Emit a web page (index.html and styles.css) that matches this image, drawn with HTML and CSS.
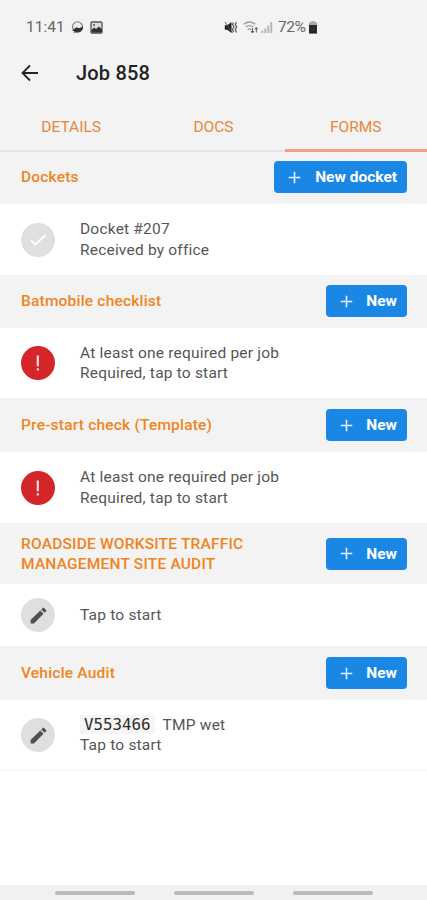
FILE: index.html
```html
<!DOCTYPE html>
<html lang="en">
<head>
<meta charset="utf-8">
<title>Job 858</title>
<link rel="stylesheet" href="styles.css">
</head>
<body>
<svg width="0" height="0" class="defs">
  <symbol id="plus" viewBox="0 0 14 14"><path d="M7 .8v12.4M.8 7h12.4" stroke="#e6f3fd" stroke-width="1.7" fill="none"/></symbol>
  <symbol id="pencil" viewBox="0 0 24 24"><path d="M3 17.25V21h3.75L17.81 9.94l-3.75-3.75L3 17.25zM20.71 7.04a1 1 0 0 0 0-1.41l-2.34-2.34a1 1 0 0 0-1.41 0l-1.83 1.83 3.75 3.75 1.83-1.83z" fill="#505050"/></symbol>
  <symbol id="alert" viewBox="0 0 34 34"><path d="M15.7 9.5h2.2v10.7h-2.2zM15.7 22.2h2.2v2.2h-2.2z" fill="#f8dada"/></symbol>
</svg>
<header class="top">
  <div class="status">
    <span class="clock">11:41</span>
    <svg class="app" width="13" height="13" viewBox="0 0 13 13"><circle cx="6.5" cy="5.8" r="5" fill="#eee" stroke="#777" stroke-width="1.1"/><path d="M.8 9.2C3.4 8.7 4.3 6 6 6.2c1.6 1.5 3.2 1 5.8-.9.5 3.500-1.600 5.900-4.400 6.200H2.200l1.500-1.300z" fill="#333"/></svg>
    <svg class="photo" width="13" height="13" viewBox="0 0 13 13"><rect x="1" y="1" width="11" height="11" rx="1" fill="#ddd" stroke="#555" stroke-width="1.3"/><path d="M1.500 11.500V9l2.500-2.500 2 1.500L9 5.500l3 3v3z" fill="#333"/><circle cx="4" cy="4" r="1" fill="#555"/></svg>
    <svg class="mute" width="14" height="13" viewBox="0 0 14 13"><path d="M.8 4.200h2.500L7.500 1v11L3.300 8.800H.8z" fill="#222"/><path d="M1 1l7.500 11" stroke="#555" stroke-width="1"/><path d="M9.500 1.500l-1 2 1.500 2.500-1.500 2.500 1 2.500M12.500 1l-1.200 2.200 1.300 2.800-1.300 2.800 1.200 2.700" stroke="#555" stroke-width="1.200" fill="none"/></svg>
    <svg class="wifi" width="16" height="13" viewBox="0 0 16 13"><path d="M.8 3.200Q6.500-1.200 12.200 3.200M2.800 6Q6.500 3.200 10.300 6M4.700 8.600Q6.500 7.200 8.300 8.600" fill="none" stroke="#999" stroke-width="1.400"/><path d="M9.500 11.800V7M8 10l1.500 2 1.500-2M13.300 11.500V6.500M11.900 8.300l1.400-1.800 1.400 1.800" stroke="#555" stroke-width="1" fill="none"/></svg>
    <svg class="signal" width="12" height="13" viewBox="0 0 12 13"><path d="M1.300 12V9.500M4.300 12V7.500M7.300 12V4.500M10.300 12V1" stroke="#b3b3b3" stroke-width="1.800"/></svg>
    <span class="percent">72%</span>
    <svg class="battery" width="10" height="13" viewBox="0 0 10 13"><path d="M3.300 0h3.400v1.300H9V12.500H1V1.300h2.300z" fill="#aaa"/><path d="M1 4h8v8.500H1z" fill="#2a2a2a"/></svg>
  </div>
  <div class="title">
    <svg width="18" height="18" viewBox="0 0 18 18"><path d="M17 9H2M9 1.500L1.500 9 9 16.500" fill="none" stroke="#252525" stroke-width="1.800"/></svg>
    <h1>Job 858</h1>
  </div>
  <nav class="tabs"><span>DETAILS</span><span>DOCS</span><span class="active">FORMS</span></nav>
</header>
<main>
  <section>
    <div class="head first"><h2 class="dockets">Dockets</h2><button class="wide"><svg><use href="#plus"/></svg><span>New docket</span></button></div>
    <div class="row"><div class="dot"><svg width="34" height="34" viewBox="0 0 34 34"><path d="M10 17.500l4.200 4L24.500 12" fill="none" stroke="#fff" stroke-width="1.900"/></svg></div><p>Docket #207<br>Received by office</p></div>
  </section>
  <section>
    <div class="head short"><h2>Batmobile checklist</h2><button><svg><use href="#plus"/></svg><span>New</span></button></div>
    <div class="row low"><div class="dot red"><svg width="34" height="34"><use href="#alert"/></svg></div><p>At least one required per job<br>Required, tap to start</p></div>
  </section>
  <section>
    <div class="head"><h2>Pre-start check (Template)</h2><button><svg><use href="#plus"/></svg><span>New</span></button></div>
    <div class="row"><div class="dot red"><svg width="34" height="34"><use href="#alert"/></svg></div><p>At least one required per job<br>Required, tap to start</p></div>
  </section>
  <section>
    <div class="head tall"><h2 class="caps">ROADSIDE WORKSITE TRAFFIC<br>MANAGEMENT SITE AUDIT</h2><button><svg><use href="#plus"/></svg><span>New</span></button></div>
    <div class="row single"><div class="dot"><svg width="21" height="21"><use href="#pencil"/></svg></div><p>Tap to start</p></div>
  </section>
  <section>
    <div class="head"><h2>Vehicle Audit</h2><button><svg><use href="#plus"/></svg><span>New</span></button></div>
    <div class="row last"><div class="dot"><svg width="21" height="21"><use href="#pencil"/></svg></div><p><code>V553466</code><span class="tag">TMP wet</span><br>Tap to start</p></div>
  </section>
</main>
<footer><i></i><i></i><i></i></footer>
</body>
</html>
```
FILE: styles.css
```css
* { box-sizing: border-box; }
body { margin: 0; width: 427px; height: 900px; overflow: hidden; background: #fff; font-family: Roboto, sans-serif; display: flex; flex-direction: column; }
.defs { position: absolute; }
svg { display: block; flex: none; }
.top { height: 152px; background: #f3f3f3; flex: none; }
.status { height: 54px; display: flex; align-items: center; padding-left: 26px; color: #666; font-size: 15.500px; }
.clock { width: 38px; }
.app { margin-left: 7px; }
.photo { margin-left: 6px; }
.mute { margin-left: 121px; }
.wifi { margin-left: 5px; }
.signal { margin-left: 2px; }
.percent { margin-left: 5px; width: 30px; letter-spacing: -.4px; }
.title { height: 38px; display: flex; align-items: center; padding-left: 21px; }
h1 { margin: 0 0 0 37px; font-size: 20px; font-weight: 500; letter-spacing: .2px; color: #222; }
.tabs { height: 60px; display: grid; grid-template-columns: 1fr 1fr 1fr; border-bottom: 2px solid #e3e3e3; }
.tabs span { display: flex; justify-content: center; padding-top: 25px; font-size: 15.500px; color: #e8873c; line-height: 20px; height: 60px; }
.tabs .active { border-bottom: 3px solid #eea188; }
.head { height: 54px; background: #f3f3f3; display: flex; align-items: center; justify-content: space-between; padding: 0 20px 0 21px; }
.head.first { height: 52px; padding-bottom: 2px; }
.head.short { height: 53px; padding-bottom: 1px; }
.head.tall { height: 61px; }
h2 { margin: 0; font-size: 15.500px; line-height: 20px; font-weight: 500; color: #f08420; letter-spacing: .2px; }
button { width: 81px; height: 32px; border: 0; padding: 0 10px 0 14px; border-radius: 4px; background: #1b87e5; color: #fff; font: 700 15.500px Roboto, sans-serif; display: flex; align-items: center; justify-content: space-between; }
button svg { width: 13px; height: 13px; }
button.wide { width: 133px; }
.row { height: 71px; display: flex; align-items: center; padding-left: 21px; }
.row.low { height: 70px; }
.row.single { height: 62px; }
.row.last { border-bottom: 1px solid #f5f5f5; }
.dot { width: 34px; height: 34px; border-radius: 50%; background: #dfdfdf; display: flex; align-items: center; justify-content: center; }
.dot.red { background: #d42529; }
p { margin: 0 0 0 25px; font-size: 15.500px; line-height: 20.500px; color: #565656; letter-spacing: .2px; }
code { font: 15.800px/19px "DejaVu Sans Mono", monospace; letter-spacing: 0; background: #f5f5f5; padding: 0 4px; color: #2c2c2c; }
.tag { margin-left: 8px; }
footer { height: 15px; margin-top: auto; background: #f1f1f1; display: flex; justify-content: center; gap: 39px; padding-top: 6px; }
footer i { width: 80px; height: 4px; border-radius: 2px; background: #b9b9b9; }
```
